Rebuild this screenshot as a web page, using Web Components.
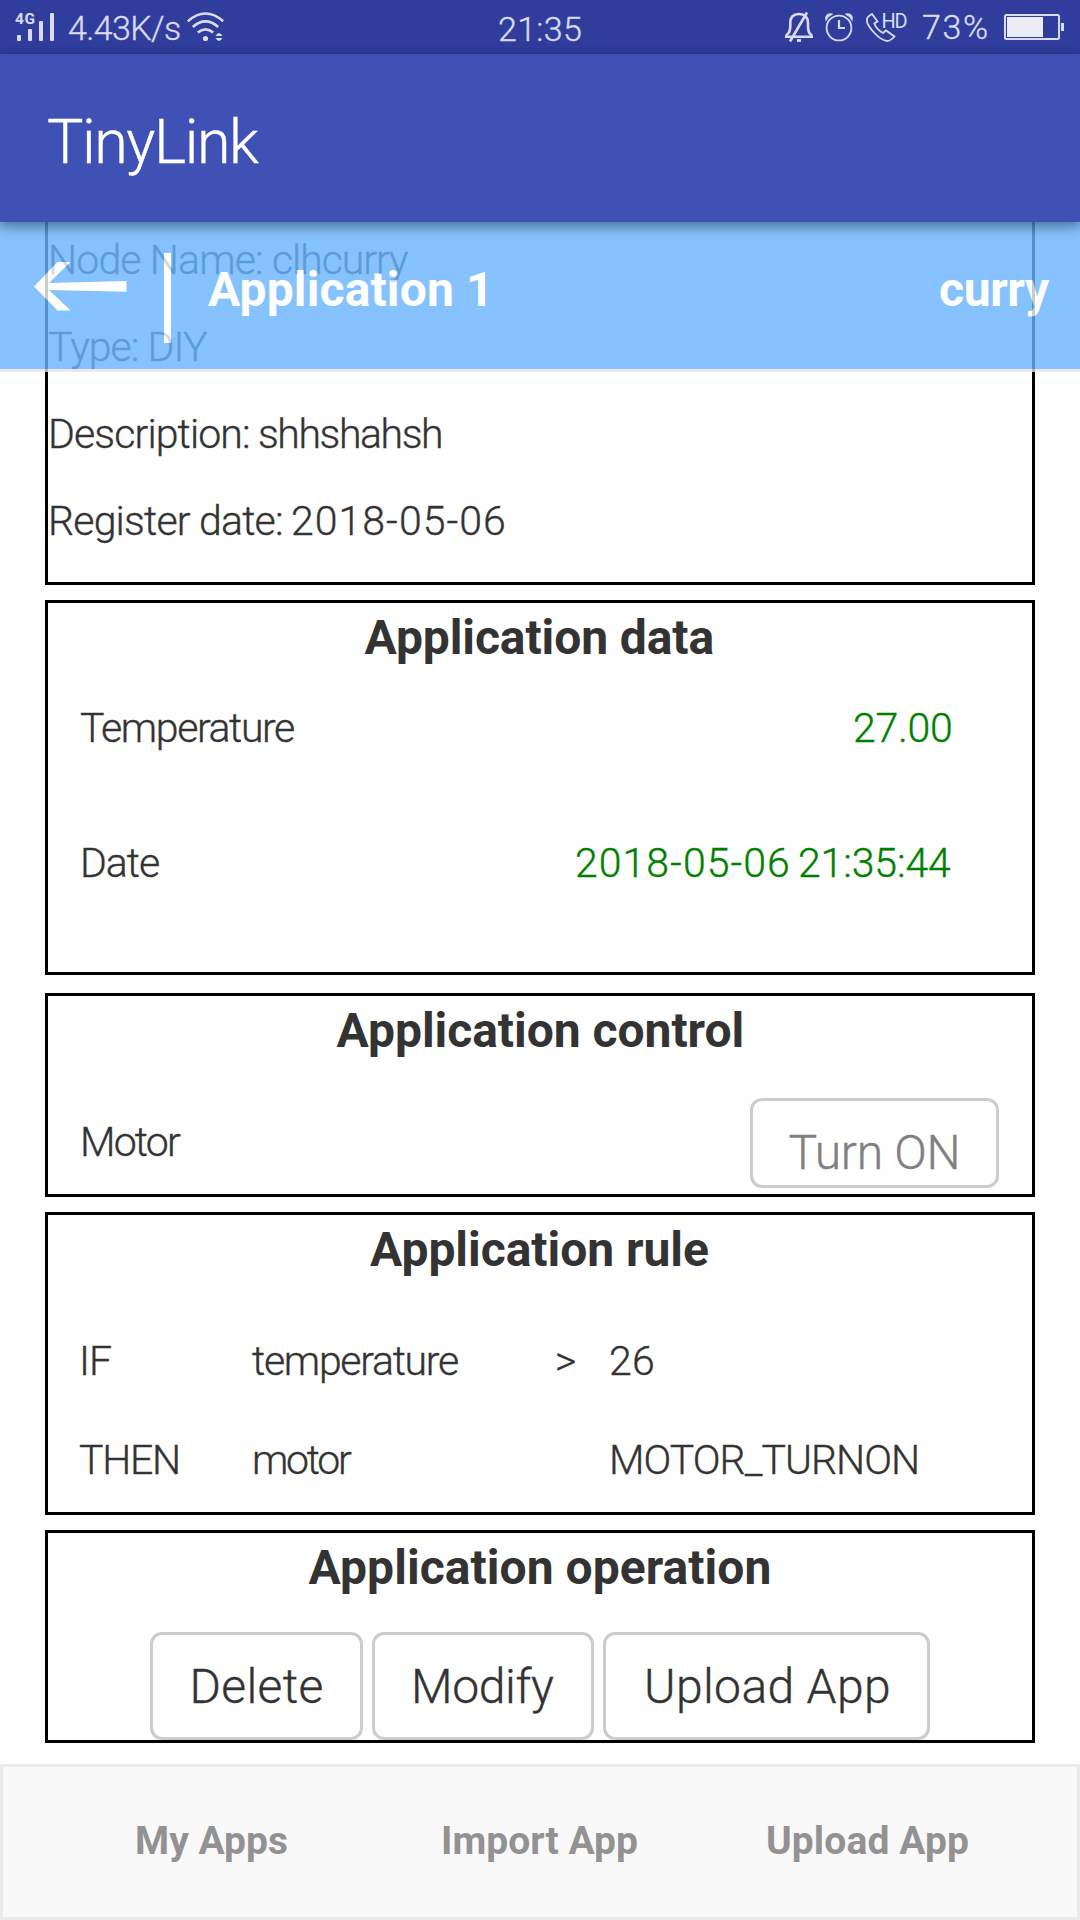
<!DOCTYPE html>
<html lang="en">
<head>
<meta charset="utf-8">
<title>TinyLink</title>
<style>
html,body{margin:0;padding:0}
body{width:1080px;height:1920px;overflow:hidden;background:#fefefe;font-family:Roboto,"Liberation Sans",sans-serif;color:#333}
</style>
</head>
<body>
<tiny-app></tiny-app>
<script>
const ctx = document.createElement('canvas').getContext('2d');

/* Text run whose inked width is given by the w attribute. */
class FitText extends HTMLElement {
  connectedCallback() {
    const w = +this.getAttribute('w'), size = +(this.getAttribute('size') || 41);
    const weight = this.getAttribute('weight') || '300';
    const text = this.textContent;
    const root = this.attachShadow({mode: 'open'});
    ctx.font = `${weight} ${size}px Roboto, "Liberation Sans", sans-serif`;
    const m = ctx.measureText(text);
    const ink = m.actualBoundingBoxLeft + m.actualBoundingBoxRight;
    const ls = text.length > 1 ? (w - ink) / (text.length - 1) : 0;
    root.innerHTML = `<style>
      :host{display:block;flex:none;width:${w}px;white-space:nowrap;font-size:${size}px;font-weight:${weight};font-variant-ligatures:none}
      span{display:block;margin-left:${m.actualBoundingBoxLeft.toFixed(2)}px;letter-spacing:${ls.toFixed(3)}px;${weight === '300' ? '-webkit-text-stroke:.35px currentColor' : ''}}
    </style><span><slot></slot></span>`;
  }
}

const define = (name, html) => customElements.define(name, class extends HTMLElement {
  constructor() { super(); this.attachShadow({mode: 'open'}).innerHTML = html; }
});

define('status-bar', `<style>
  :host{display:flex;height:54px;background:#303d9d;color:#d9dcf0;line-height:57px}
  svg{display:block;flex:none;fill:none;stroke:#d9dcf0}
  .time{margin-left:273px;line-height:59px}
  .right{display:flex;margin-left:auto}
  .pct{margin:-1px 15px 0 14px}
</style>
<svg width="69" height="54" viewBox="0 0 69 54"><g fill="#d9dcf0" stroke="none"><text x="15" y="24" font-family="Roboto" font-weight="700" font-size="15.5" textLength="20">4G</text><rect x="17" y="35" width="4" height="6" rx="1"/><rect x="28" y="29" width="4" height="12" rx="1"/><rect x="39" y="21" width="4" height="20" rx="1"/><rect x="50" y="13" width="4" height="28" rx="1"/></g></svg>
<fit-text w="111" size="34">4.43K/s</fit-text>
<svg width="46" height="54" viewBox="180 0 46 54" stroke-width="2.6"><path d="M187.8 21.2Q205.500 5.800 223.200 21.200M192.800 27Q205.500 15.800 218.200 27M197.800 32.600Q205.500 26 213.200 32.600"/><g fill="#d9dcf0" stroke="none"><circle cx="205.500" cy="38.500" r="2.600"/><path d="M215.500 36q3.500-6 7 0zM215.500 38h7q-3.500 6-7 0z"/></g></svg>
<fit-text class="time" w="82" size="34">21:35</fit-text>
<div class="right">
<svg width="129" height="54" viewBox="780 0 129 54" stroke-width="2.200">
 <path stroke-width="2.600" d="M786.200 36.800H811.800Q811.800 34.500 809.500 33.200Q808.200 31.500 808 26.500V23Q807.700 14 799 14Q790.300 14 790.300 23V26.500Q790 31.500 788.500 33.200Q786.200 34.500 786.200 36.800zM807 12.500L790 41.500"/><path d="M797 40.500h4" stroke-width="2.800"/>
 <circle cx="839" cy="28" r="12.400" stroke-width="1.800"/><path d="M839 20v8h6"/><path d="M826 20Q824.500 13.500 832.500 14Q828.500 15.500 826 20zM852 20Q853.500 13.500 845.500 14Q849.500 15.500 852 20z" fill="#d9dcf0" stroke-width="1.200"/>
 <path stroke-width="1.800" d="M872 14L877.500 21.500L874.300 23.500Q876.500 29.500 883 33L886 30.500L894.500 36.500Q890.500 41 887 41Q881.500 40.500 874.500 33Q866.800 25 866.800 20Q867 16.500 872 14z"/>
 <text x="881.500" y="27.500" font-family="Roboto" font-size="20" textLength="26" fill="#d9dcf0" stroke="none">HD</text>
</svg>
<fit-text class="pct" w="64" size="34">73%</fit-text>
<svg width="78" height="54" viewBox="1002 0 78 54"><rect x="1005" y="15" width="54" height="24" rx="1.500" stroke-width="2"/><rect x="1007" y="17" width="36" height="20" fill="#ebecf6" stroke="none"/><rect x="1061" y="23" width="3" height="8" fill="#d9dcf0" stroke="none"/></svg>
</div>`);

define('app-bar', `<style>
  :host{display:flex;height:168px;padding-left:48px;box-sizing:border-box;background:#3f51b5;color:#fff;line-height:177px;position:relative;z-index:3;box-shadow:0 4px 12px 1px rgba(0,0,0,.4)}
</style><slot></slot>`);

define('page-header', `<style>
  :host{display:flex;box-sizing:border-box;height:150px;background:#68b4ff;border-bottom:3px solid #e6e6e6;opacity:.8;color:#fff;line-height:135px}
  svg{display:block;flex:none}
  .user{margin:0 30px 0 auto}
</style>
<svg width="208" height="147" viewBox="0 222 208 147" fill="#fff"><path d="M34 286.500L57.500 262H70.500L49 283L126.500 281V291.700L49 290L70.500 310.500H57.500z"/><rect x="164" y="253" width="7" height="90"/></svg>
<fit-text w="277" size="48" weight="700">Application 1</fit-text>
<fit-text class="user" w="110" size="48" weight="700">curry</fit-text>`);

define('info-card', `<style>
  :host{display:flex;flex-direction:column;box-sizing:border-box;border:3px solid #000}
  .title{display:flex;justify-content:center;line-height:69px;flex:none;padding-right:2px}
</style><div class="title"><slot name="title"></slot></div><slot></slot>`);

define('app-button', `<style>
  :host{display:flex;justify-content:center;box-sizing:border-box;border:3px solid #ccc;border-radius:12px;line-height:103px}
</style><slot></slot>`);

define('tab-bar', `<style>
  :host{display:grid;grid-template-columns:repeat(3,328px);justify-content:center;justify-items:center;box-sizing:border-box;height:156px;border:3px solid #ebebeb;background:#f9f9f9;color:#929292;line-height:149px}
</style><slot></slot>`);

define('tiny-app', `<style>
  :host{display:flex;flex-direction:column;height:1920px}
  main{position:relative;flex:1;display:flex;flex-direction:column;padding:0 45px}
  page-header{position:absolute;left:0;right:0;top:0;z-index:2}
  .node{height:363px;border-top:0;margin-bottom:15px}
  .lines{display:grid;grid-auto-rows:87px;line-height:87px;padding-left:3px;margin-top:-5px}
  .type{margin-left:-2px}
  .pair{display:flex;gap:12px}
  .data{height:375px;margin-bottom:18px}
  .row{display:flex;justify-content:space-between;padding:0 81px 0 33px}
  .temp{line-height:112px}
  .date{line-height:158px;padding-left:35px}
  .value{color:#008000}
  .control{height:204px;margin-bottom:15px}
  .motor{display:flex;justify-content:space-between;align-items:flex-start;padding:33px 33px 0 35px}
  .motor>fit-text{line-height:82px;margin-top:3px}
  .motor app-button{width:249px;height:90px;padding:17px 3px 0 0;line-height:69px;color:#808080}
  .rule{height:303px;margin-bottom:15px}
  .rules{display:grid;grid-template-columns:173px 303px 54px auto;grid-auto-rows:99px;line-height:101px;padding:27px 0 0 33px}
  .operation{height:213px}
  .buttons{display:flex;justify-content:center;gap:9px;padding-top:30px}
  .buttons app-button{height:108px;padding-left:3px}
</style>
<status-bar></status-bar>
<app-bar><fit-text w="211" size="61">TinyLink</fit-text></app-bar>
<main>
  <page-header></page-header>
  <info-card class="node"><div class="lines">
    <div class="pair"><fit-text w="210">Node Name:</fit-text><fit-text w="135">clhcurry</fit-text></div>
    <fit-text class="type" w="158">Type: DIY</fit-text>
    <div class="pair"><fit-text w="197">Description:</fit-text><fit-text w="181">shhshahsh</fit-text></div>
    <div class="pair"><fit-text w="230">Register date:</fit-text><fit-text w="211">2018-05-06</fit-text></div>
  </div></info-card>
  <info-card class="data">
    <fit-text slot="title" w="349" size="48" weight="700">Application data</fit-text>
    <div class="row temp"><fit-text w="213">Temperature</fit-text><fit-text class="value" w="96">27.00</fit-text></div>
    <div class="row date"><fit-text w="76">Date</fit-text><div class="pair value"><fit-text w="211">2018-05-06</fit-text><fit-text w="151">21:35:44</fit-text></div></div>
  </info-card>
  <info-card class="control">
    <fit-text slot="title" w="405" size="48" weight="700">Application control</fit-text>
    <div class="motor"><fit-text w="98">Motor</fit-text><app-button><fit-text w="167" size="48">Turn ON</fit-text></app-button></div>
  </info-card>
  <info-card class="rule">
    <fit-text slot="title" w="338" size="48" weight="700">Application rule</fit-text>
    <div class="rules">
      <fit-text w="28" style="margin-left:2px">IF</fit-text><fit-text w="206" style="margin-left:-2px">temperature</fit-text><fit-text w="19">&gt;</fit-text><fit-text w="42">26</fit-text>
      <fit-text w="98" style="margin-left:-1px">THEN</fit-text><fit-text w="97" style="margin-left:1px">motor</fit-text><span></span><fit-text w="305" style="margin-left:1px">MOTOR_TURNON</fit-text>
    </div>
  </info-card>
  <info-card class="operation">
    <fit-text slot="title" w="461" size="48" weight="700">Application operation</fit-text>
    <div class="buttons">
      <app-button style="width:213px"><fit-text w="129" size="48">Delete</fit-text></app-button>
      <app-button style="width:222px"><fit-text w="139" size="48">Modify</fit-text></app-button>
      <app-button style="width:327px"><fit-text w="242" size="48">Upload App</fit-text></app-button>
    </div>
  </info-card>
</main>
<tab-bar>
  <fit-text w="150" size="39" weight="700">My Apps</fit-text>
  <fit-text w="194" size="39" weight="700">Import App</fit-text>
  <fit-text w="200" size="39" weight="700">Upload App</fit-text>
</tab-bar>`);

customElements.define('fit-text', FitText);
</script>
</body>
</html>
